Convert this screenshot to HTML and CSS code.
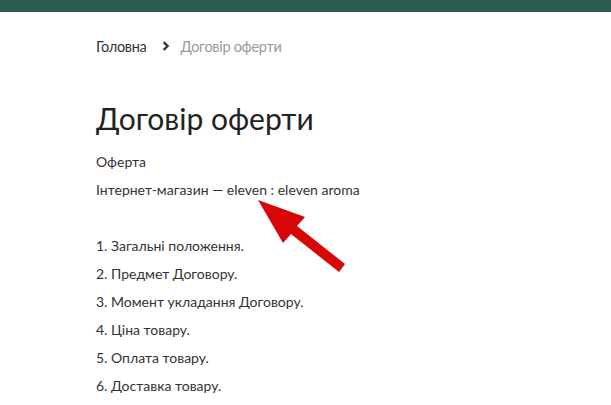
FILE: index.html
```html
<!DOCTYPE html>
<html>
<head>
    <title>Договір оферти</title>
    <link rel="stylesheet" href="styles.css">
</head>
<body>
    <div class="topbar"></div>

    <div class="page">
        <div class="breadcrumbs">
            <a href="#" class="crumb">Головна</a>
            <svg class="crumb-sep" width="8" height="10" viewBox="0 0 8 10">
                <path d="M1.6 1.2 L5.6 5 L1.6 8.8" fill="none" stroke="#3a3a3a" stroke-width="2.4"/>
            </svg>
            <span class="crumb current">Договір оферти</span>
        </div>

        <h1 class="title">Договір оферти</h1>

        <div class="content">
            <p>Оферта</p>
            <p>Інтернет-магазин — eleven : eleven aroma</p>
            <p>&nbsp;</p>
            <p>1. Загальні положення.</p>
            <p>2. Предмет Договору.</p>
            <p>3. Момент укладання Договору.</p>
            <p>4. Ціна товару.</p>
            <p>5. Оплата товару.</p>
            <p>6. Доставка товару.</p>
        </div>
    </div>

    <svg class="pointer" width="611" height="405" viewBox="0 0 611 405">
        <polygon fill="#d70707" points="258,200 305,217 297,226 345,264 339,272 291,234 283,243"/>
    </svg>
</body>
</html>
```

FILE: styles.css
```css
body {
    margin: 0;
    font-family: Lato, "Open Sans", sans-serif;
    color: #333;
    background-color: #fff;
}
.topbar {
    height: 12px;
    background-color: #2f5c51;
}
.page {
    padding: 0 96px;
}
.breadcrumbs {
    display: flex;
    align-items: center;
    height: 24px;
    margin-top: 22px;
    font-size: 14.5px;
}
.crumb {
    color: #333;
    text-decoration: none;
    letter-spacing: -0.3px;
}
.crumb-sep {
    margin: 0 10px 0 16px;
}
.current {
    color: #999;
}
.title {
    margin: 42px 0 0 0;
    font-size: 30px;
    font-weight: 400;
    line-height: 36px;
    color: #222;
}
.content {
    margin-top: 12px;
    font-size: 14px;
    line-height: 28px;
}
.content p {
    margin: 0;
}
.pointer {
    position: absolute;
    top: 0;
    left: 0;
    pointer-events: none;
}
```
